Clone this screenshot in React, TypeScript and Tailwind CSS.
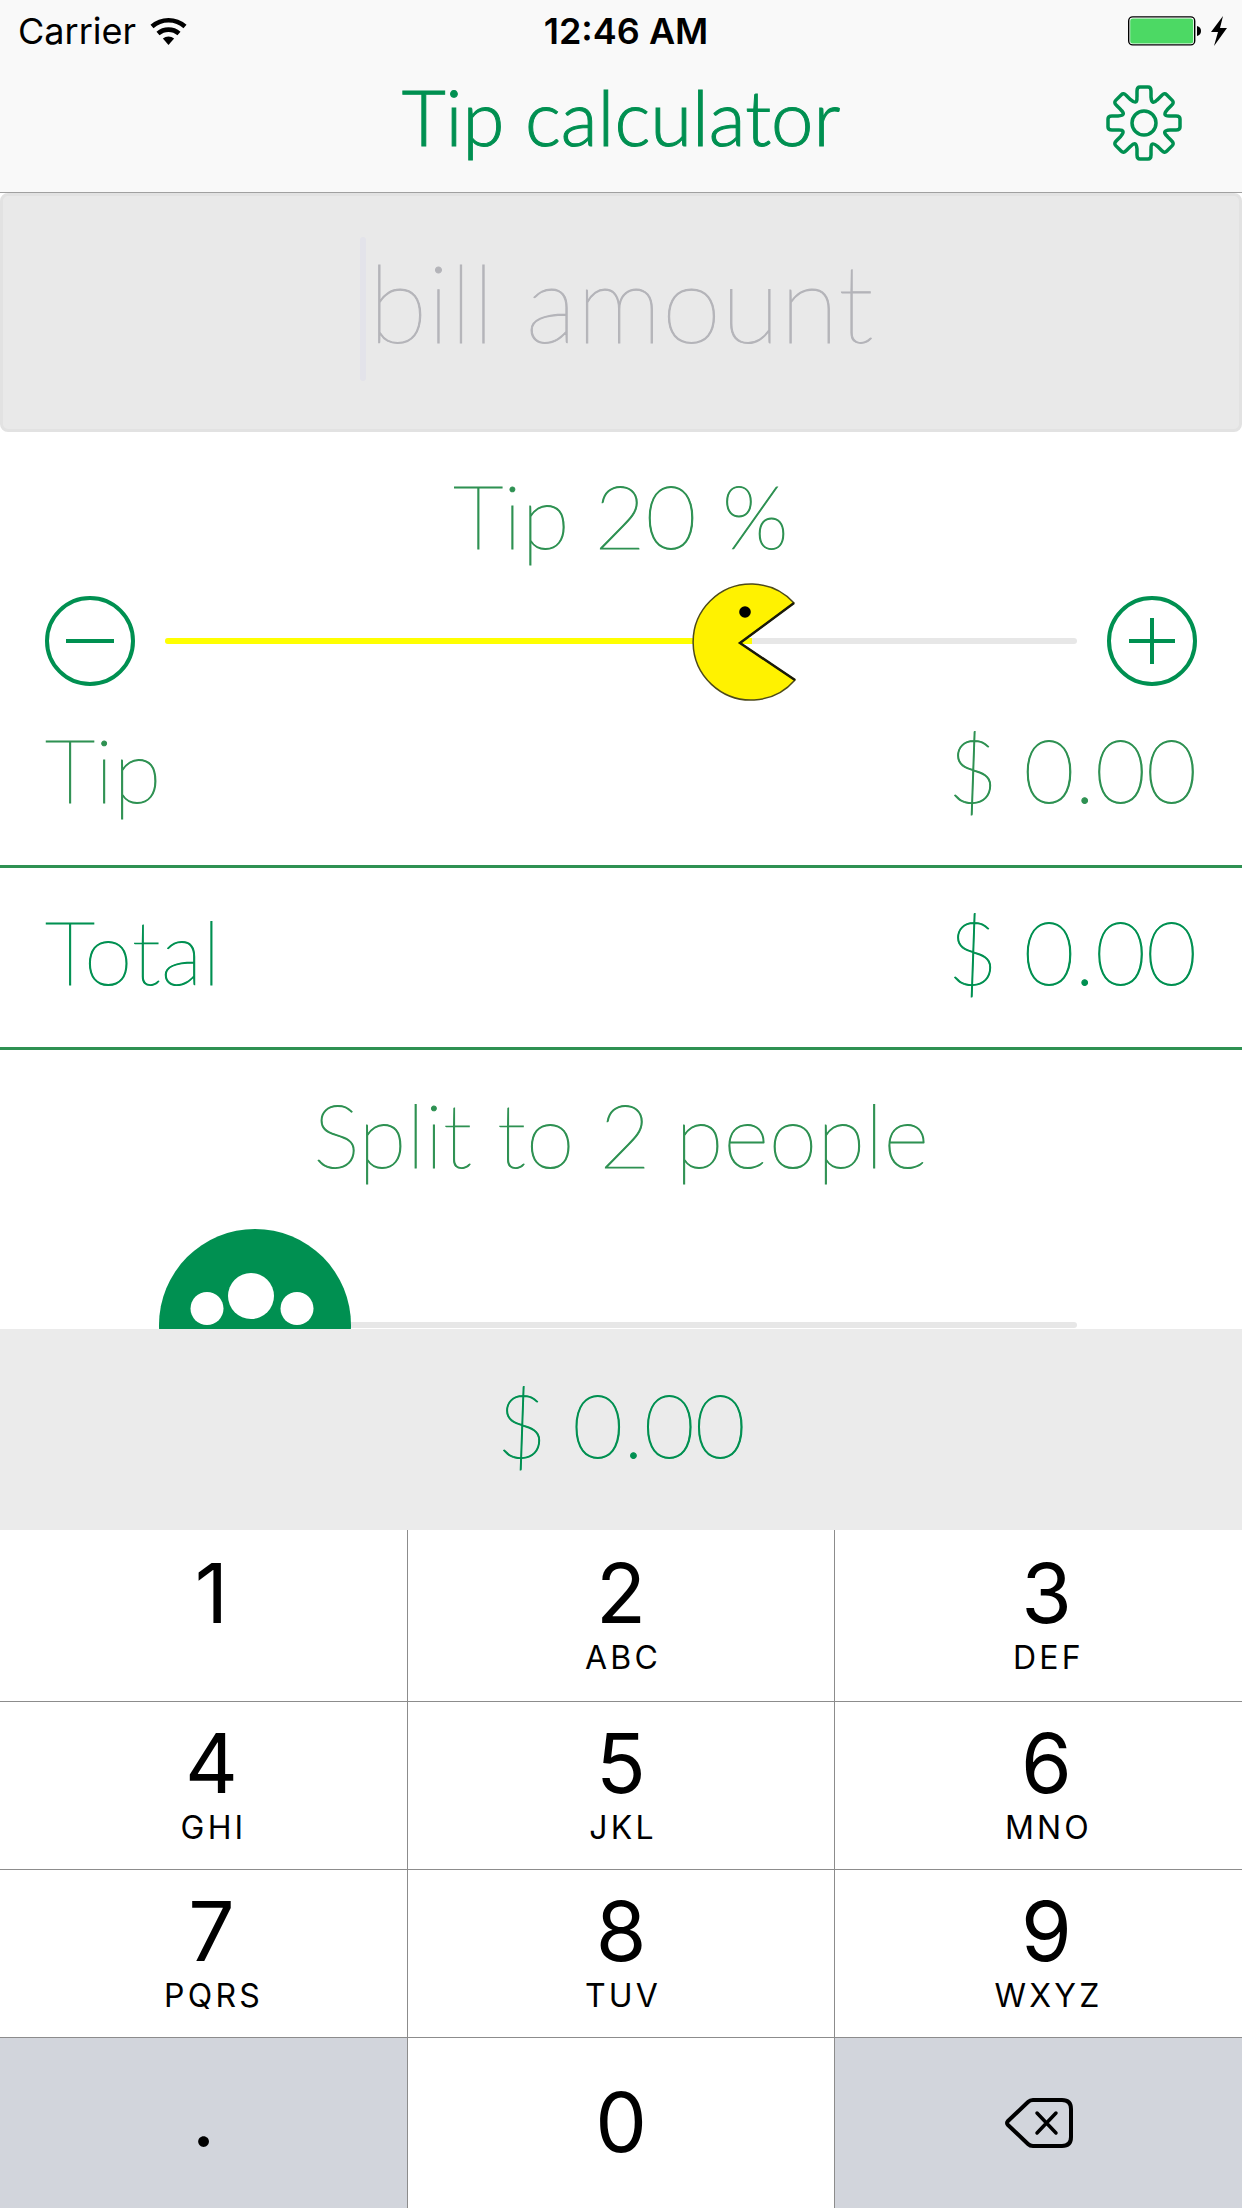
import { useState } from "react";
import type { ReactNode } from "react";

const thin = "font-['Lato','Noto_Sans',sans-serif] font-thin [-webkit-text-stroke-width:1px]";

const gearPath = (() => {
  const teeth: string[] = [];
  for (let k = 0; k < 8; k++) {
    const angle = (k * Math.PI) / 4;
    const p = (x: number, y: number) =>
      `${(x * Math.cos(angle) - y * Math.sin(angle)).toFixed(2)} ${(x * Math.sin(angle) + y * Math.cos(angle)).toFixed(2)}`;
    teeth.push(
      `${k === 0 ? "M" : "L"}${p(-7, -26)}L${p(-7, -32)}Q${p(-7, -36)} ${p(-4, -36)}L${p(4, -36)}Q${p(7, -36)} ${p(7, -32)}L${p(7, -26)}C${p(7.5, -20)} ${p(9.5, -19)} ${p(13.4, -23.4)}`
    );
  }
  return teeth.join("") + "Z";
})();

function GearIcon() {
  return (
    <svg viewBox="-38 -38 76 76" className="size-19" fill="none" stroke="#009051" strokeWidth="3.5" strokeLinejoin="round" aria-hidden="true">
      <path d={gearPath} />
      <circle r="12" />
    </svg>
  );
}

function StatusBar() {
  return (
    <div className="grid h-[62px] grid-cols-3 items-center pr-[14px] pl-[18px] font-['Inter',sans-serif] text-4xl text-black">
      <div className="flex items-center gap-3.5">
        <span>Carrier</span>
        <svg viewBox="0 0 37 28" className="h-7 w-[37px]" aria-hidden="true">
          <path d="M18.5 28l-5.6-6.6a9 9 0 0 1 11.2 0z" />
          <path d="M8 16.6a16 16 0 0 1 21 0M2 9.500a25 25 0 0 1 33 0" fill="none" stroke="#000" strokeWidth="4.600" />
        </svg>
      </div>
      <span className="pl-1.5 text-center font-semibold">12:46 AM</span>
      <div className="flex items-center justify-end">
        <svg viewBox="0 0 100 30" className="h-[30px] w-[100px]" aria-hidden="true">
          <rect x="0.700" y="0.900" width="66" height="28" rx="4" fill="#fff" stroke="#000" strokeWidth="1.400" />
          <rect x="2.200" y="2.400" width="63" height="25" rx="2.500" fill="#4cd964" />
          <path d="M69 10q4 1 4 5t-4 5z" />
          <path d="M95 0L83 16h7l-4 14 13-18h-7z" />
        </svg>
      </div>
    </div>
  );
}

type SliderProps = {
  label: string;
  min: number;
  max: number;
  value: number;
  thumbWidth: number;
  fill?: boolean;
  onChange: (n: number) => void;
  children: ReactNode;
};

function Slider({ label, min, max, value, thumbWidth, fill, onChange, children }: SliderProps) {
  const ratio = (value - min) / (max - min);
  const left = `calc((100% - ${thumbWidth}px) * ${ratio})`;
  return (
    <div className="relative flex flex-1 items-center">
      <div className="mx-1.5 h-1.5 flex-1 overflow-hidden rounded-full bg-[#e7e7e7]">
        {fill && <div className="h-full bg-[#ffff00]" style={{ width: `calc(${left} + ${thumbWidth / 2}px)` }} />}
      </div>
      <div className="absolute" style={{ left, width: thumbWidth }}>
        {children}
      </div>
      <input
        type="range"
        aria-label={label}
        min={min}
        max={max}
        value={value}
        onChange={(e) => onChange(Number(e.target.value))}
        className="absolute inset-0 h-full w-full cursor-pointer opacity-0"
      />
    </div>
  );
}

function RoundButton({ label, onClick, d }: { label: string; onClick: () => void; d: string }) {
  return (
    <button type="button" aria-label={label} onClick={onClick}>
      <svg viewBox="0 0 90 90" className="size-[90px]" fill="none" stroke="#009051" strokeWidth="4" aria-hidden="true">
        <circle cx="45" cy="45" r="43" />
        <path d={d} />
      </svg>
    </button>
  );
}

function AmountRow({ label, amount, color }: { label: string; amount: string; color: string }) {
  return (
    <div className={`flex items-end justify-between border-b-3 border-[#2e9152] px-[45px] pb-13 ${color}`}>
      <span>{label}</span>
      <span>{amount}</span>
    </div>
  );
}

const keys = [
  ["1", ""], ["2", "ABC"], ["3", "DEF"],
  ["4", "GHI"], ["5", "JKL"], ["6", "MNO"],
  ["7", "PQRS"], ["8", "TUV"], ["9", "WXYZ"],
];

export default function App() {
  const [bill, setBill] = useState("");
  const [tip, setTip] = useState(20);
  const [people, setPeople] = useState(2);
  const amount = Number(bill) || 0;
  const tipAmount = (amount * tip) / 100;
  const money = (n: number) => `$ ${n.toFixed(2)}`;

  return (
    <div className="flex h-screen flex-col bg-white">
      <header className="border-b border-[#a0a0a0] bg-[#f9f9f9]">
        <StatusBar />
        <div className="grid h-[130px] grid-cols-[1fr_auto_1fr] items-center px-15 pb-2">
          <h1 className="col-start-2 pb-3 font-['Lato','Noto_Sans',sans-serif] text-[76px] leading-none font-light text-[#009051] [-webkit-text-stroke-width:1px]">Tip calculator</h1>
          <button type="button" aria-label="Settings" className="justify-self-end">
            <GearIcon />
          </button>
        </div>
      </header>

      <div className="relative bg-white">
        <input
          aria-label="Bill amount"
          value={bill}
          onChange={(e) => setBill(e.target.value)}
          inputMode="decimal"
          placeholder="bill amount"
          className={`${thin} block h-[239px] w-full rounded-lg border-3 border-[#e2e2e2] bg-[#e9e9e9] pb-6 text-center text-[108px] text-[#009051] placeholder:text-[#b4b4b9]`}
        />
        <span className="absolute top-11 left-[29%] h-36 w-1.5 rounded-full bg-[#e3e3ea]" />
      </div>

      <main className={`${thin} min-h-0 flex-1 overflow-hidden text-[88px] leading-none text-[#2e9152]`}>
        <h2 className="flex h-[150px] items-center justify-center pt-4">Tip {tip} %</h2>
        <div className="flex h-[118px] items-center gap-6 px-[45px]">
          <RoundButton label="Decrease tip" onClick={() => setTip(Math.max(0, tip - 1))} d="M21 45H69" />
          <Slider label="Tip percentage" min={0} max={30} value={tip} thumbWidth={126} fill onChange={setTip}>
            <svg viewBox="0 0 126 120" className="h-[120px] w-full" aria-hidden="true">
              <path d="M103 22A58 58 0 1 0 104 99L49 62Z" fill="#fff200" stroke="#4d4a1a" strokeWidth="1.500" />
              <path d="M103 22L49 62L104 99" fill="none" stroke="#1a1a0a" strokeWidth="2.500" />
              <circle cx="54" cy="31" r="5.800" />
            </svg>
          </Slider>
          <RoundButton label="Increase tip" onClick={() => setTip(Math.min(30, tip + 1))} d="M22 45H68M45 22V68" />
        </div>
        <div className="grid grid-rows-[168px_182px]">
          <AmountRow label="Tip" amount={money(tipAmount)} color="text-[#2e9152]" />
          <AmountRow label="Total" amount={money(amount + tipAmount)} color="text-[#009051]" />
        </div>
        <h2 className="flex h-[179px] items-center justify-center pb-3">Split to {people} people</h2>
        <div className="flex h-48 px-[159px]">
          <Slider label="Number of people" min={2} max={20} value={people} thumbWidth={192} onChange={setPeople}>
            <svg viewBox="0 0 192 192" className="w-full" aria-hidden="true">
              <circle cx="96" cy="96" r="96" fill="#009051" />
              <g fill="#fff">
                <circle cx="92" cy="67" r="23" />
                <circle cx="48" cy="79.500" r="16.500" />
                <circle cx="138" cy="79.500" r="16.500" />
              </g>
            </svg>
          </Slider>
        </div>
      </main>

      <output className={`${thin} flex h-[201px] items-center justify-center bg-[#ebebeb] pb-3 text-[88px] leading-none text-[#009051]`}>
        {money((amount + tipAmount) / people)}
      </output>

      <div className="grid grid-cols-[407fr_426fr_407fr] grid-rows-[171px_167px_167px_170px] gap-px bg-[#8c8c8c] font-['Inter',sans-serif] text-black">
        {keys.map(([digit, letters], i) => (
          <button
            key={digit}
            type="button"
            onClick={() => setBill(bill + digit)}
            className={`flex flex-col items-center justify-center bg-white ${i % 3 === 1 ? "" : "pl-4"}`}
          >
            <span className="text-[82px] leading-[84px]">{digit}</span>
            <span className="h-11 pl-1 text-[32px] leading-[44px] tracking-widest">{letters}</span>
          </button>
        ))}
        <button type="button" onClick={() => setBill(bill + ".")} className="bg-[#d2d5dc] pb-3 text-[82px] leading-none">.</button>
        <button type="button" onClick={() => setBill(bill + "0")} className="bg-white text-[82px] leading-none">0</button>
        <button type="button" aria-label="Delete" onClick={() => setBill(bill.slice(0, -1))} className="grid place-items-center bg-[#d2d5dc]">
          <svg viewBox="0 0 68 50" className="h-[50px] w-17" fill="none" stroke="#000" strokeWidth="4" strokeLinecap="round" strokeLinejoin="round" aria-hidden="true">
            <path d="M28 2H57Q66 2 66 11V39Q66 48 57 48H28Q25 48 23 46L3 27Q1 25 3 23L23 4Q25 2 28 2Z" />
            <path d="M32 15L51 35M51 15L32 35" strokeWidth="3.500" />
          </svg>
        </button>
      </div>
    </div>
  );
}
